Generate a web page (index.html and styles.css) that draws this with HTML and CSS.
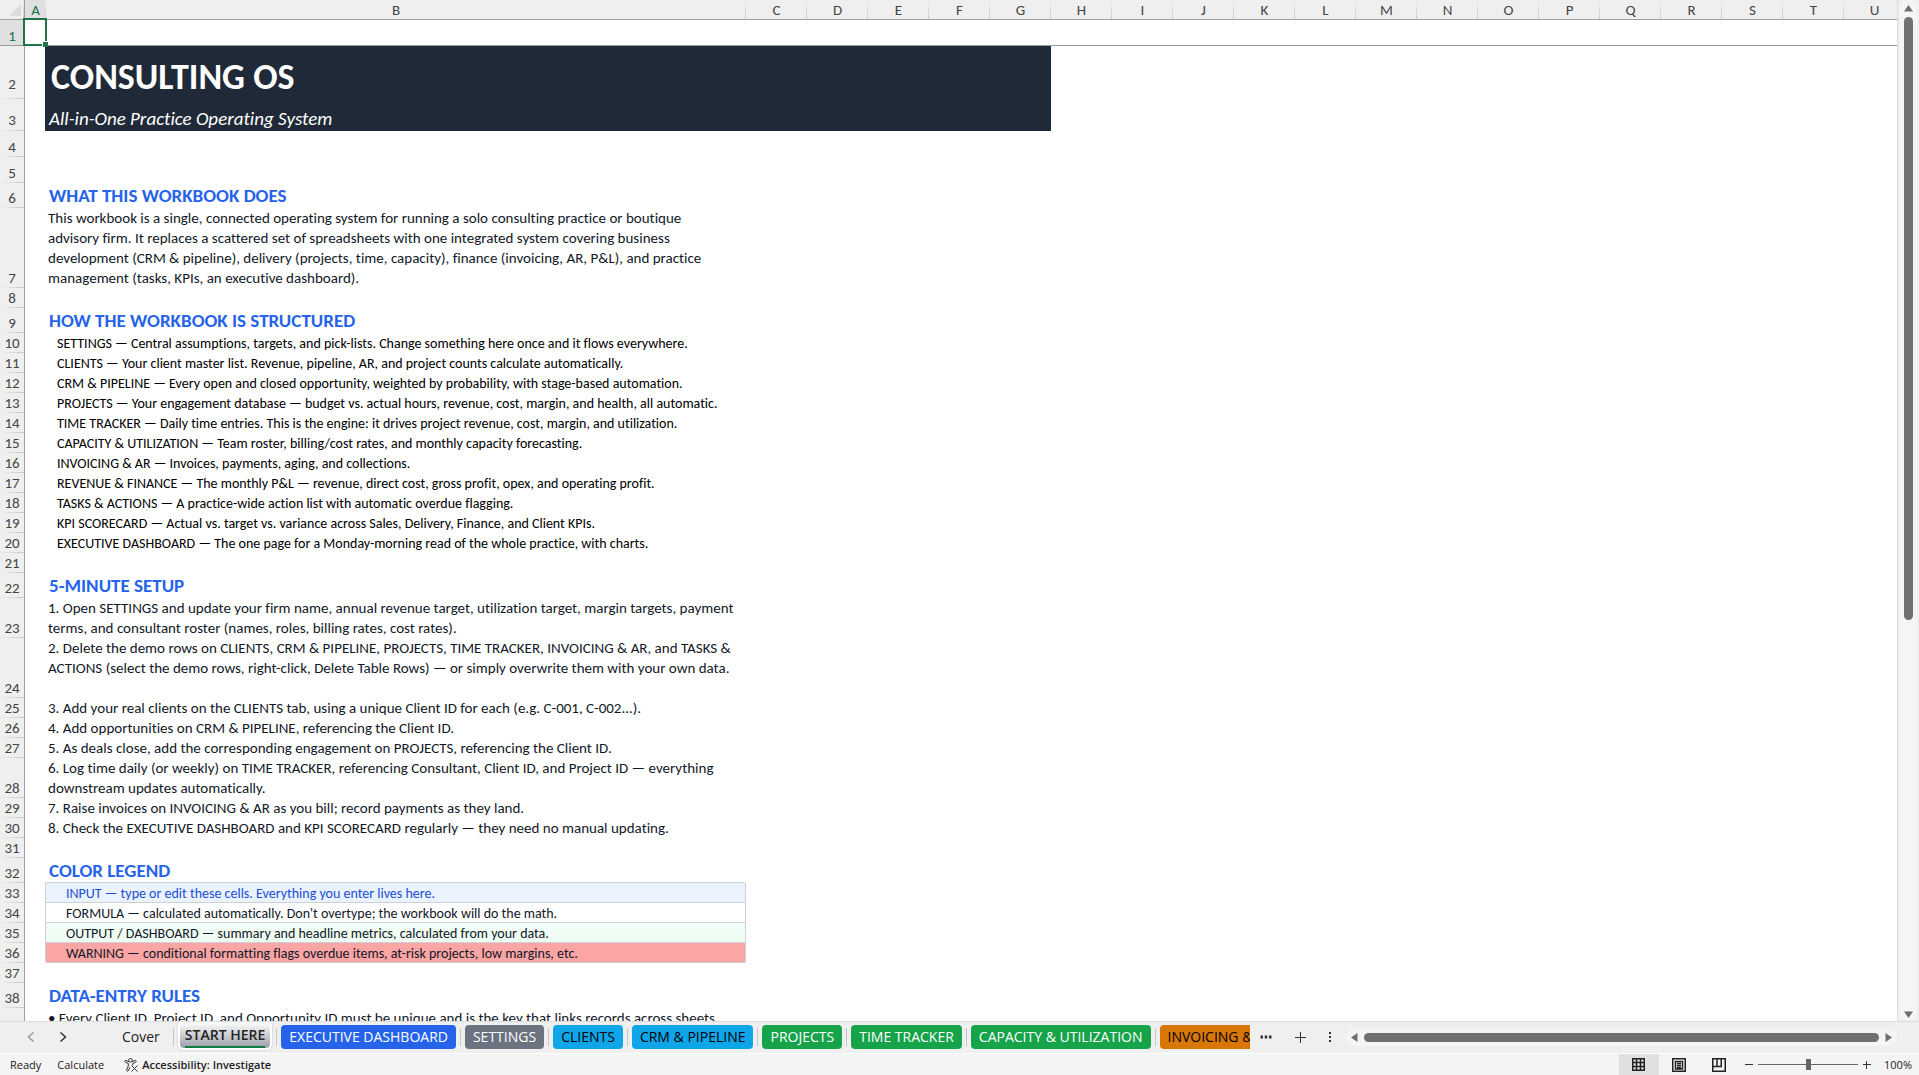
FILE: index.html
```html
<!DOCTYPE html>
<html lang="en">
<head>
<meta charset="utf-8">
<title>Consulting OS - START HERE</title>
<link rel="stylesheet" href="styles.css">
</head>
<body>
<div class="app">
  <main class="workspace">
    <div class="sheet">
      <table class="grid">
        <colgroup>
          <col class="w-head"><col class="w-a"><col class="w-b">
          <col class="w-std" span="19"><col>
        </colgroup>
        <thead>
          <tr>
            <th class="corner"><svg width="25" height="17" viewBox="0 0 25 17" aria-hidden="true"><path d="M21 2v12H9z" fill="#dcdcdc"/></svg></th>
            <th class="selected">A</th><th>B</th><th>C</th><th>D</th><th>E</th><th>F</th><th>G</th><th>H</th><th>I</th><th>J</th><th>K</th><th>L</th><th>M</th><th>N</th><th>O</th><th>P</th><th>Q</th><th>R</th><th>S</th><th>T</th><th>U</th><th></th>
          </tr>
        </thead>
        <tbody>
          <tr class="h26 frozen"><th class="selected">1</th><td class="active"><div class="cursor"><i class="handle"></i></div></td><td></td><td colspan="20"></td></tr>
          <tr class="h53"><th>2</th><td></td><td class="banner title" colspan="6">CONSULTING OS</td><td colspan="15"></td></tr>
          <tr class="h32"><th>3</th><td></td><td class="banner tagline" colspan="6">All-in-One Practice Operating System</td><td colspan="15"></td></tr>
          <tr class="h26"><th>4</th><td></td><td></td><td colspan="20"></td></tr>
          <tr class="h26"><th>5</th><td></td><td></td><td colspan="20"></td></tr>
          <tr class="h25"><th>6</th><td></td><td class="heading">WHAT THIS WORKBOOK DOES</td><td colspan="20"></td></tr>
          <tr class="h80"><th>7</th><td></td><td class="body">This workbook is a single, connected operating system for running a solo consulting practice or boutique<br>advisory firm. It replaces a scattered set of spreadsheets with one integrated system covering business<br>development (CRM &amp; pipeline), delivery (projects, time, capacity), finance (invoicing, AR, P&amp;L), and practice<br>management (tasks, KPIs, an executive dashboard).</td><td colspan="20"></td></tr>
          <tr class="h20"><th>8</th><td></td><td></td><td colspan="20"></td></tr>
          <tr class="h25"><th>9</th><td></td><td class="heading">HOW THE WORKBOOK IS STRUCTURED</td><td colspan="20"></td></tr>
          <tr class="h20"><th>10</th><td></td><td class="item">SETTINGS — Central assumptions, targets, and pick-lists. Change something here once and it flows everywhere.</td><td colspan="20"></td></tr>
          <tr class="h20"><th>11</th><td></td><td class="item">CLIENTS — Your client master list. Revenue, pipeline, AR, and project counts calculate automatically.</td><td colspan="20"></td></tr>
          <tr class="h20"><th>12</th><td></td><td class="item">CRM &amp; PIPELINE — Every open and closed opportunity, weighted by probability, with stage-based automation.</td><td colspan="20"></td></tr>
          <tr class="h20"><th>13</th><td></td><td class="item">PROJECTS — Your engagement database — budget vs. actual hours, revenue, cost, margin, and health, all automatic.</td><td colspan="20"></td></tr>
          <tr class="h20"><th>14</th><td></td><td class="item">TIME TRACKER — Daily time entries. This is the engine: it drives project revenue, cost, margin, and utilization.</td><td colspan="20"></td></tr>
          <tr class="h20"><th>15</th><td></td><td class="item">CAPACITY &amp; UTILIZATION — Team roster, billing/cost rates, and monthly capacity forecasting.</td><td colspan="20"></td></tr>
          <tr class="h20"><th>16</th><td></td><td class="item">INVOICING &amp; AR — Invoices, payments, aging, and collections.</td><td colspan="20"></td></tr>
          <tr class="h20"><th>17</th><td></td><td class="item">REVENUE &amp; FINANCE — The monthly P&amp;L — revenue, direct cost, gross profit, opex, and operating profit.</td><td colspan="20"></td></tr>
          <tr class="h20"><th>18</th><td></td><td class="item">TASKS &amp; ACTIONS — A practice-wide action list with automatic overdue flagging.</td><td colspan="20"></td></tr>
          <tr class="h20"><th>19</th><td></td><td class="item">KPI SCORECARD — Actual vs. target vs. variance across Sales, Delivery, Finance, and Client KPIs.</td><td colspan="20"></td></tr>
          <tr class="h20"><th>20</th><td></td><td class="item">EXECUTIVE DASHBOARD — The one page for a Monday-morning read of the whole practice, with charts.</td><td colspan="20"></td></tr>
          <tr class="h20"><th>21</th><td></td><td></td><td colspan="20"></td></tr>
          <tr class="h25"><th>22</th><td></td><td class="heading">5-MINUTE SETUP</td><td colspan="20"></td></tr>
          <tr class="h40"><th>23</th><td></td><td class="body">1. Open SETTINGS and update your firm name, annual revenue target, utilization target, margin targets, payment<br>terms, and consultant roster (names, roles, billing rates, cost rates).</td><td colspan="20"></td></tr>
          <tr class="h60"><th>24</th><td></td><td class="body">2. Delete the demo rows on CLIENTS, CRM &amp; PIPELINE, PROJECTS, TIME TRACKER, INVOICING &amp; AR, and TASKS &amp;<br>ACTIONS (select the demo rows, right-click, Delete Table Rows) — or simply overwrite them with your own data.</td><td colspan="20"></td></tr>
          <tr class="h20"><th>25</th><td></td><td class="body">3. Add your real clients on the CLIENTS tab, using a unique Client ID for each (e.g. C-001, C-002...).</td><td colspan="20"></td></tr>
          <tr class="h20"><th>26</th><td></td><td class="body">4. Add opportunities on CRM &amp; PIPELINE, referencing the Client ID.</td><td colspan="20"></td></tr>
          <tr class="h20"><th>27</th><td></td><td class="body">5. As deals close, add the corresponding engagement on PROJECTS, referencing the Client ID.</td><td colspan="20"></td></tr>
          <tr class="h40"><th>28</th><td></td><td class="body">6. Log time daily (or weekly) on TIME TRACKER, referencing Consultant, Client ID, and Project ID — everything<br>downstream updates automatically.</td><td colspan="20"></td></tr>
          <tr class="h20"><th>29</th><td></td><td class="body">7. Raise invoices on INVOICING &amp; AR as you bill; record payments as they land.</td><td colspan="20"></td></tr>
          <tr class="h20"><th>30</th><td></td><td class="body">8. Check the EXECUTIVE DASHBOARD and KPI SCORECARD regularly — they need no manual updating.</td><td colspan="20"></td></tr>
          <tr class="h20"><th>31</th><td></td><td></td><td colspan="20"></td></tr>
          <tr class="h25"><th>32</th><td></td><td class="heading">COLOR LEGEND</td><td colspan="20"></td></tr>
          <tr class="h20"><th>33</th><td></td><td class="legend input">INPUT — type or edit these cells. Everything you enter lives here.</td><td colspan="20"></td></tr>
          <tr class="h20"><th>34</th><td></td><td class="legend">FORMULA — calculated automatically. Don't overtype; the workbook will do the math.</td><td colspan="20"></td></tr>
          <tr class="h20"><th>35</th><td></td><td class="legend output">OUTPUT / DASHBOARD — summary and headline metrics, calculated from your data.</td><td colspan="20"></td></tr>
          <tr class="h20"><th>36</th><td></td><td class="legend warning">WARNING — conditional formatting flags overdue items, at-risk projects, low margins, etc.</td><td colspan="20"></td></tr>
          <tr class="h20"><th>37</th><td></td><td></td><td colspan="20"></td></tr>
          <tr class="h25"><th>38</th><td></td><td class="heading">DATA-ENTRY RULES</td><td colspan="20"></td></tr>
          <tr class="h40"><th>39</th><td></td><td class="body">• Every Client ID, Project ID, and Opportunity ID must be unique and is the key that links records across sheets.</td><td colspan="20"></td></tr>
        </tbody>
      </table>
    </div>
    <div class="vscroll">
      <svg width="9" height="7" viewBox="0 0 9 7" aria-hidden="true"><path d="M4.500 0 9 6.500H0z"/></svg>
      <div class="vtrack"><div class="vthumb"></div></div>
      <svg width="9" height="7" viewBox="0 0 9 7" aria-hidden="true"><path d="M0 .5h9L4.500 7z"/></svg>
    </div>
  </main>

  <nav class="tabbar" aria-label="Sheets">
    <div class="tabnav">
      <button class="icon-btn dim" aria-label="Previous sheets"><svg width="8" height="12" viewBox="0 0 8 12"><path d="M6.500 1.500 1.500 6l5 4.500"/></svg></button>
      <button class="icon-btn" aria-label="Next sheets"><svg width="8" height="12" viewBox="0 0 8 12"><path d="M1.500 1.500 6.500 6l-5 4.500"/></svg></button>
    </div>
    <div class="tabs">
      <button class="tab plain">Cover</button><i class="sep"></i>
      <button class="tab current"><span>START HERE</span></button><i class="sep"></i>
      <button class="tab blue">EXECUTIVE DASHBOARD</button><i class="sep"></i>
      <button class="tab gray">SETTINGS</button><i class="sep"></i>
      <button class="tab sky">CLIENTS</button><i class="sep"></i>
      <button class="tab sky">CRM &amp; PIPELINE</button><i class="sep"></i>
      <button class="tab green">PROJECTS</button><i class="sep"></i>
      <button class="tab green">TIME TRACKER</button><i class="sep"></i>
      <button class="tab green">CAPACITY &amp; UTILIZATION</button><i class="sep"></i>
      <button class="tab orange">INVOICING &amp; AR</button>
    </div>
    <div class="tabtools">
      <button class="icon-btn" aria-label="More sheets"><svg width="12" height="4" viewBox="0 0 12 4"><path class="solid" d="M.5.5h2.500v3H.5zM4.750.5h2.500v3h-2.500zM9 .5h2.500v3H9z"/></svg></button>
      <button class="icon-btn" aria-label="New sheet"><svg width="11" height="11" viewBox="0 0 11 11"><path d="M5.500 0v11M0 5.500h11"/></svg></button>
      <button class="icon-btn" aria-label="Resize tabs"><svg width="2" height="10" viewBox="0 0 2 10"><path class="solid" d="M0 0h2v2H0zM0 4h2v2H0zM0 8h2v2H0z"/></svg></button>
    </div>
    <div class="hscroll">
      <svg width="7" height="9" viewBox="0 0 7 9" aria-hidden="true"><path d="M0 4.500 6.500 0v9z"/></svg>
      <div class="hthumb"></div>
      <svg width="7" height="9" viewBox="0 0 7 9" aria-hidden="true"><path d="M7 4.500.5 0v9z"/></svg>
    </div>
  </nav>

  <footer class="status">
    <span>Ready</span>
    <span>Calculate</span>
    <button class="access">
      <svg width="15" height="14" viewBox="0 0 15 14" aria-hidden="true"><circle cx="6.500" cy="2.300" r="1.800"/><path d="M5 3.700 2 2.500C.8 2.100.2 3.700 1.300 4.200l3 1.300v2.300L2.700 12c-.4 1.200 1.100 1.800 1.600.7L6 9.200M8 3.700l3-1.200c1.200-.4 1.800 1.200.7 1.700l-3 1.300v1.800M7.500 7.500l6 6M13.500 7.500l-6 6"/></svg>
      Accessibility: Investigate
    </button>
    <div class="views">
      <button class="view on" aria-label="Normal view"><svg width="14" height="14" viewBox="0 0 14 14"><path d="M.75.75h11.500v11.500H.75zM4.500.75v11.500M8.500.75v11.500M.75 4.500h11.500M.75 8.500h11.500"/></svg></button>
      <button class="view" aria-label="Page layout"><svg width="14" height="14" viewBox="0 0 14 14"><path d="M.75.75h12.500v12.500H.75zM3.500 3.500h7v7.500h-7zM5 5.500h4M5 7.500h4M5 9.500h4"/></svg></button>
      <button class="view" aria-label="Page break preview"><svg width="14" height="14" viewBox="0 0 14 14"><path d="M.75.75h12.500v12.500H.75zM.75 8.500h8.500V.75M5 .75V8.500"/></svg></button>
    </div>
    <div class="zoom">
      <button class="icon-btn" aria-label="Zoom out"><svg width="8" height="8" viewBox="0 0 8 8"><path d="M0 3.500h8"/></svg></button>
      <input type="range" aria-label="Zoom" min="0" max="100" value="50">
      <button class="icon-btn" aria-label="Zoom in"><svg width="8" height="8" viewBox="0 0 8 8"><path d="M0 3.500h8M3.500 0v8"/></svg></button>
      <span>100%</span>
    </div>
  </footer>
</div>
</body>
</html>
```
FILE: styles.css
```css
* { box-sizing: border-box; }

body {
  margin: 0;
  background: #efefef;
  font-family: "Open Sans", "Noto Sans", sans-serif;
}

button {
  border: 0;
  padding: 0;
  background: none;
  font: inherit;
  color: inherit;
}

.app {
  display: flex;
  flex-direction: column;
  height: 100vh;
  overflow: hidden;
}

/* Worksheet */

.workspace {
  flex: 1;
  min-height: 0;
  display: flex;
}

.sheet {
  flex: 1;
  min-width: 0;
  overflow: hidden;
  background: #fff;
  border-right: 1px solid #dcdcdc;
}

.grid {
  width: 100%;
  min-width: 1905px;
  table-layout: fixed;
  border-spacing: 0;
  font-family: Calibri, Carlito, Lato, sans-serif;
  font-size: 15px;
  font-variant-ligatures: none;
  line-height: 20px;
  color: #111827;
}

.w-head { width: 25px; }
.w-a { width: 21px; }
.w-b { width: 700px; }
.w-std { width: 61px; }

.grid th,
.grid td {
  padding: 0;
  white-space: nowrap;
  text-align: left;
}

.grid th {
  font-weight: 400;
  text-align: center;
  color: #444;
}

.grid thead th {
  height: 20px;
  padding-top: 2px;
  line-height: 17px;
  border-bottom: 1px solid #a0a0a0;
  background: linear-gradient(#efefef, #c8c8c8) right / 1px 100% no-repeat #efefef;
}

.grid thead .corner {
  text-align: left;
  border-right: 1px solid #a0a0a0;
}

.corner svg { display: block; }

.grid tbody th {
  vertical-align: bottom;
  border-right: 1px solid #a0a0a0;
  background: linear-gradient(90deg, #efefef, #c8c8c8) bottom / 100% 1px no-repeat #efefef;
}

.grid th.selected {
  background-color: #e0e0e0;
  color: #217346;
}

.h20 { height: 20px; }
.h25 { height: 25px; }
.h26 { height: 26px; }
.h32 { height: 32px; }
.h40 { height: 40px; }
.h53 { height: 53px; }
.h60 { height: 60px; }
.h80 { height: 80px; }

.h32 th { padding-bottom: 1px; }
.h53 th { padding-bottom: 5px; }

.frozen td { border-bottom: 1px solid #999; }
.grid .frozen th { background-image: linear-gradient(#999, #999); }

.active { position: relative; }

.cursor {
  position: absolute;
  inset: -2px -1px -1px -2px;
  border: 2px solid #217346;
}

.handle {
  position: absolute;
  right: -3px;
  bottom: -3px;
  width: 6px;
  height: 6px;
  border: solid #fff;
  border-width: 1px 0 0 1px;
  background: #217346;
}

.grid .banner {
  background: #1f2937;
  box-shadow: -1px 0 #1f2937;
  color: #fff;
}

.grid .title {
  padding: 8px 0 0 5px;
  font-size: 36px;
  font-weight: 700;
  line-height: 44px;
}

.grid .tagline {
  padding: 8px 0 0 3px;
  font-size: 19px;
  font-style: italic;
  line-height: 24px;
}

.grid .heading {
  padding-left: 3px;
  font-size: 19px;
  font-weight: 700;
  line-height: 25px;
  color: #2563eb;
}

.grid .body {
  padding-left: 2px;
  vertical-align: top;
}

.grid .item {
  padding: 2px 0 0 11px;
  font-size: 14px;
  line-height: 18px;
  color: #000;
}

.grid .legend {
  padding: 2px 0 0 20px;
  font-size: 14px;
  line-height: 17px;
  border: solid #cdd2da;
  border-width: 0 1px 1px 0;
  box-shadow: -1px -1px #cdd2da;
}

.legend.input { background: #e9f2fd; color: #1d4ed8; }
.legend.output { background: #f0fdf4; }
.legend.warning { background: #fca5a5; }

/* Vertical scroll bar */

.vscroll {
  width: 17px;
  margin: 0 2px;
  padding: 5px 0 3px;
  display: flex;
  flex-direction: column;
  align-items: center;
  gap: 5px;
  border-radius: 8px;
  background: #f5f5f5;
}

.vscroll svg,
.hscroll svg { flex: none; fill: #6e6e6e; }

.vtrack { flex: 1; width: 9px; }

.vthumb {
  height: 61%;
  border-radius: 5px;
  background: #707070;
}

/* Sheet tabs */

.tabbar {
  height: 33px;
  display: flex;
  align-items: center;
  padding: 0 22px 1px 0;
  border-top: 1px solid #dcdcdc;
  border-bottom: 1px solid #fff;
  background: #efefef;
  font-size: 14px;
  color: #222;
}

.icon-btn {
  display: grid;
  place-items: center;
}

.icon-btn svg {
  fill: none;
  stroke: #333;
  stroke-width: 1;
}

.icon-btn .solid { fill: #333; stroke: none; }
.tabnav svg { stroke-width: 1.500; }
.icon-btn.dim svg { stroke: #999; }

.tabnav {
  flex: none;
  width: 105px;
  padding-left: 27px;
  display: flex;
  gap: 24px;
}

.tabs {
  flex: 1145 1 0;
  min-width: 0;
  height: 30px;
  display: flex;
  align-items: center;
  overflow: hidden;
}

.tab {
  flex: none;
  height: 24px;
  padding: 0 8px;
  border-radius: 4px;
  line-height: 24px;
  white-space: nowrap;
}

.sep {
  flex: none;
  width: 1px;
  height: 18px;
  margin: 0 4px;
  background: #c8c8c8;
}

.plain { padding: 0 9px 0 17px; }

.current {
  align-self: flex-start;
  height: 28px;
  padding: 0 5px;
  border: 2px solid #fff;
  border-top: 0;
  border-radius: 0 0 6px 6px;
  background: linear-gradient(#fff, #9a9ea6);
  box-shadow: 0 0 2px #bbb;
  font-weight: 600;
}

.current span {
  display: block;
  height: 25px;
  line-height: 24px;
  border-bottom: 2px solid #107c41;
}

.blue { background: #2563eb; color: #fff; }
.gray { background: #6b7280; color: #fff; }
.sky { background: #0ea5e9; color: #000; }
.green { background: #16a34a; color: #fff; }
.orange { background: #d97706; color: #000; }

.tabtools {
  flex: none;
  width: 96px;
  padding: 0 15px 0 10px;
  display: flex;
  justify-content: space-between;
}

.hscroll {
  flex: 541 1 0;
  height: 17px;
  padding: 0 5px;
  display: flex;
  align-items: center;
  gap: 6px;
  border-radius: 8px;
  background: #f5f5f5;
}

.hthumb {
  flex: 1;
  height: 9px;
  border-radius: 5px;
  background: #707070;
}

/* Status bar */

.status {
  height: 21px;
  padding: 0 7px 0 10px;
  display: flex;
  align-items: center;
  gap: 16px;
  background: #f4f4f4;
  font-size: 11px;
  line-height: 21px;
  color: #222;
}

.access {
  display: flex;
  align-items: center;
  gap: 3px;
  margin-left: 4px;
  font-weight: 600;
}

.access svg {
  fill: none;
  stroke: #333;
  stroke-width: 1;
}

.views {
  display: flex;
  margin-left: auto;
  align-self: stretch;
}

.view {
  width: 40px;
  display: grid;
  place-items: center;
}

.view.on { background: #e0e0e0; }

.view svg {
  fill: none;
  stroke: #222;
  stroke-width: 1.500;
}

.zoom {
  display: flex;
  align-items: center;
  gap: 5px;
  margin-left: -10px;
}

.zoom span { margin-left: 8px; }

.zoom input {
  appearance: none;
  width: 100px;
  height: 11px;
  margin: 0;
  background: linear-gradient(#666, #666) center / 100% 1px no-repeat;
}

.zoom input::-webkit-slider-thumb {
  appearance: none;
  width: 5px;
  height: 11px;
  background: #666;
}
```
